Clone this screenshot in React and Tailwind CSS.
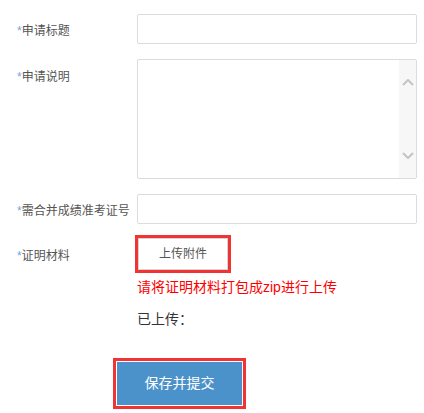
const font = { fontFamily: '"Liberation Sans", "Noto Sans CJK SC", sans-serif' };

const Label = ({ children, className = "" }) => (
  <div className={"w-[120px] shrink-0 h-[30px] leading-[30px] pt-[2px] text-[12px] text-[#555] " + className}>
    <span className="text-[#7ba3d8]">*</span>
    {children}
  </div>
);

const App = () => {
  return (
    <div style={font} className="w-[424px] h-[413px] bg-white pl-[17px] pr-[7px] pt-[14px] overflow-hidden">
      {/* 申请标题 */}
      <div className="flex">
        <Label>申请标题</Label>
        <input className="flex-1 h-[30px] border border-[#dcdcdc] rounded-[2px] outline-none px-2 text-[12px]" />
      </div>

      {/* 申请说明 */}
      <div className="flex mt-[15px]">
        <Label className="mt-px">申请说明</Label>
        <div className="flex-1 h-[120px] border border-[#dcdcdc] rounded-[2px] flex">
          <textarea className="flex-1 resize-none outline-none p-2 text-[12px]" />
          <div className="w-[17px] bg-[#f7f7f7] flex flex-col items-center justify-between py-[19px]">
            <svg width="12" height="7" viewBox="0 0 12 7">
              <path d="M1 6 L6 1 L11 6" fill="none" stroke="#c4c4c4" strokeWidth="2" />
            </svg>
            <svg width="12" height="7" viewBox="0 0 12 7">
              <path d="M1 1 L6 6 L11 1" fill="none" stroke="#c4c4c4" strokeWidth="2" />
            </svg>
          </div>
        </div>
      </div>

      {/* 准考证号 */}
      <div className="flex mt-[15px]">
        <Label>需合并成绩准考证号</Label>
        <input className="flex-1 h-[30px] border border-[#dcdcdc] rounded-[2px] outline-none px-2 text-[12px]" />
      </div>

      {/* 证明材料 */}
      <div className="flex mt-[11px]">
        <Label className="mt-1">证明材料</Label>
        <div className="flex flex-col">
          <div className="border-[3px] border-[#f03434] w-[96px] -ml-[2px]">
            <button className="w-[90px] h-[32px] bg-white border border-[#d4d4d4] text-[12px] text-[#555]">
              上传附件
            </button>
          </div>
          <p className="mt-[5px] text-[14px] leading-[18px] text-[#ff0000]">请将证明材料打包成zip进行上传</p>
          <p className="mt-[14px] text-[14px] leading-[18px] text-[#333]">已上传：</p>
        </div>
      </div>

      {/* 保存 */}
      <div className="ml-[96px] mt-[30px] w-[133px] border-[3px] border-[#f03434] p-px">
        <button className="w-full h-[43px] bg-[#4b92cb] text-white text-[14px]">保存并提交</button>
      </div>
    </div>
  );
};

export default App;
